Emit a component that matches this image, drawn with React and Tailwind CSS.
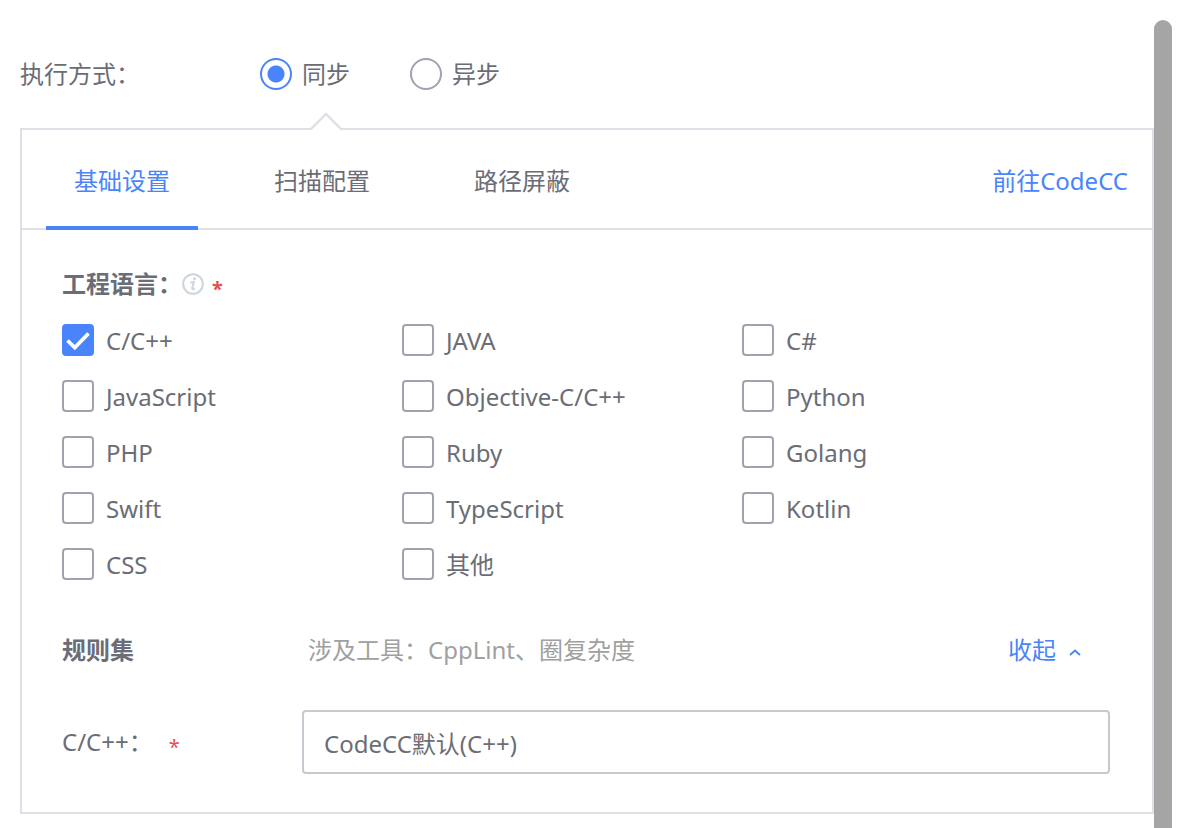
import { useState } from "react";

const LANGUAGES = [
  "C/C++", "JAVA", "C#",
  "JavaScript", "Objective-C/C++", "Python",
  "PHP", "Ruby", "Golang",
  "Swift", "TypeScript", "Kotlin",
  "CSS", "其他",
];
const TABS = ["基础设置", "扫描配置", "路径屏蔽"];

function Radio({ label, checked, onChange }) {
  return (
    <label className="flex items-center gap-[10px]">
      <input
        type="radio"
        name="mode"
        checked={checked}
        onChange={onChange}
        className="size-8 appearance-none rounded-full border-2 border-[#a0a3ad] bg-white checked:border-[#4a84fa] checked:bg-[radial-gradient(circle,#4a84fa_8px,#ffffff_9px)]"
      />
      <span>{label}</span>
    </label>
  );
}

function Checkbox({ label, checked, onChange }) {
  return (
    <label className="flex items-center gap-3">
      <span className="grid size-8 shrink-0">
        <input
          type="checkbox"
          checked={checked}
          onChange={onChange}
          className="col-start-1 row-start-1 size-8 appearance-none rounded-[4px] border-2 border-[#a0a3ad] bg-white checked:border-[#4a84fa] checked:bg-[#4a84fa]"
        />
        {checked && (
          <svg viewBox="0 0 32 32" className="pointer-events-none col-start-1 row-start-1 size-8" aria-hidden="true">
            <path d="M5.5 16.5 L12.8 23.5 L26.5 9.5" fill="none" stroke="#fff" strokeWidth="3.8" />
          </svg>
        )}
      </span>
      <span className="-mb-[2px]">{label}</span>
    </label>
  );
}

function Required() {
  return <span className="pt-[10px] text-[20px] leading-4 text-[#e4504d]">*</span>;
}

export default function App() {
  const [mode, setMode] = useState("同步");
  const [tab, setTab] = useState(TABS[0]);
  const [selected, setSelected] = useState(["C/C++"]);
  const toggle = (name) =>
    setSelected((s) => (s.includes(name) ? s.filter((n) => n !== name) : [...s, name]));

  return (
    <div className="flex min-h-screen bg-white pr-3 pl-5 font-['Noto_Sans','Noto_Sans_CJK_SC',sans-serif] text-[24px] leading-8 text-[#6b6d76]">
      <main className="min-w-0 flex-1 pt-[58px]">
        <div role="radiogroup" aria-labelledby="mode-label" className="flex items-center">
          <span id="mode-label" className="w-60">执行方式：</span>
          <div className="flex gap-[60px]">
            <Radio label="同步" checked={mode === "同步"} onChange={() => setMode("同步")} />
            <Radio label="异步" checked={mode === "异步"} onChange={() => setMode("异步")} />
          </div>
        </div>

        <section className="relative mt-[38px] border-2 border-[#dfe0e7]">
          <svg viewBox="0 0 36 18" className="absolute -top-[18px] left-[286px] h-[18px] w-9" aria-hidden="true">
            <path d="M2 18 L18 2 L34 18Z" fill="#fff" />
            <path d="M1.5 17 H3 L18 2 L33 17 H34.5" fill="none" stroke="#dfe0e7" strokeWidth="2.4" />
          </svg>
          <header className="flex h-[100px] items-stretch justify-between border-b-2 border-[#dfe0e7] px-6">
            <div role="tablist" className="-mb-[2px] flex gap-12">
              {TABS.map((name) => (
                <button
                  key={name}
                  type="button"
                  role="tab"
                  aria-selected={tab === name}
                  onClick={() => setTab(name)}
                  className="border-b-4 border-transparent px-7 pt-[6px] aria-selected:border-[#4a84fa] aria-selected:text-[#4a84fa]"
                >
                  {name}
                </button>
              ))}
            </div>
            <a href="#codecc" className="flex items-center pt-1 text-[#4a84fa]">前往CodeCC</a>
          </header>

          <div className="pt-[38px] pr-[42px] pb-[38px] pl-10">
            <fieldset>
              <legend className="flex items-center font-bold">
                工程语言：
                <svg viewBox="0 0 22 22" className="mr-2 size-[22px]" aria-hidden="true">
                  <circle cx="11" cy="11" r="9.8" fill="none" stroke="#cdd5df" strokeWidth="2" />
                  <circle cx="12.4" cy="5.8" r="1.5" fill="#cdd5df" />
                  <path d="M8.4 9.6 L11.8 9 L10.2 15.2 Q10.2 17 12.8 15.4" fill="none" stroke="#cdd5df" strokeWidth="2" />
                </svg>
                <Required />
              </legend>
              <div className="mt-6 grid grid-cols-3 gap-y-6 pr-7">
                {LANGUAGES.map((name) => (
                  <Checkbox key={name} label={name} checked={selected.includes(name)} onChange={() => toggle(name)} />
                ))}
              </div>
            </fieldset>

            <div className="mt-[54px] flex items-center pr-7">
              <h2 className="w-[246px] font-bold">规则集</h2>
              <p className="flex-1 text-[#a0a0a0]">涉及工具：CppLint、圈复杂度</p>
              <button type="button" className="flex items-center gap-3 text-[#4a84fa]">
                收起
                <svg viewBox="0 0 14 8" className="mt-1 h-2 w-[14px]" aria-hidden="true">
                  <path d="M2 7 L7 2.5 L12 7" fill="none" stroke="#4a84fa" strokeWidth="1.8" />
                </svg>
              </button>
            </div>

            <div className="mt-11 flex items-center">
              <label htmlFor="ruleset" className="flex w-60 items-center gap-4">
                C/C++：
                <Required />
              </label>
              <input
                id="ruleset"
                type="text"
                defaultValue="CodeCC默认(C++)"
                className="h-16 min-w-0 flex-1 rounded-[4px] border-2 border-[#c8c9d0] bg-white px-5 outline-none"
              />
            </div>
          </div>
        </section>
      </main>
      <div className="mt-5 w-[18px] shrink-0 rounded-t-full bg-[#a5a5a5]" />
    </div>
  );
}
